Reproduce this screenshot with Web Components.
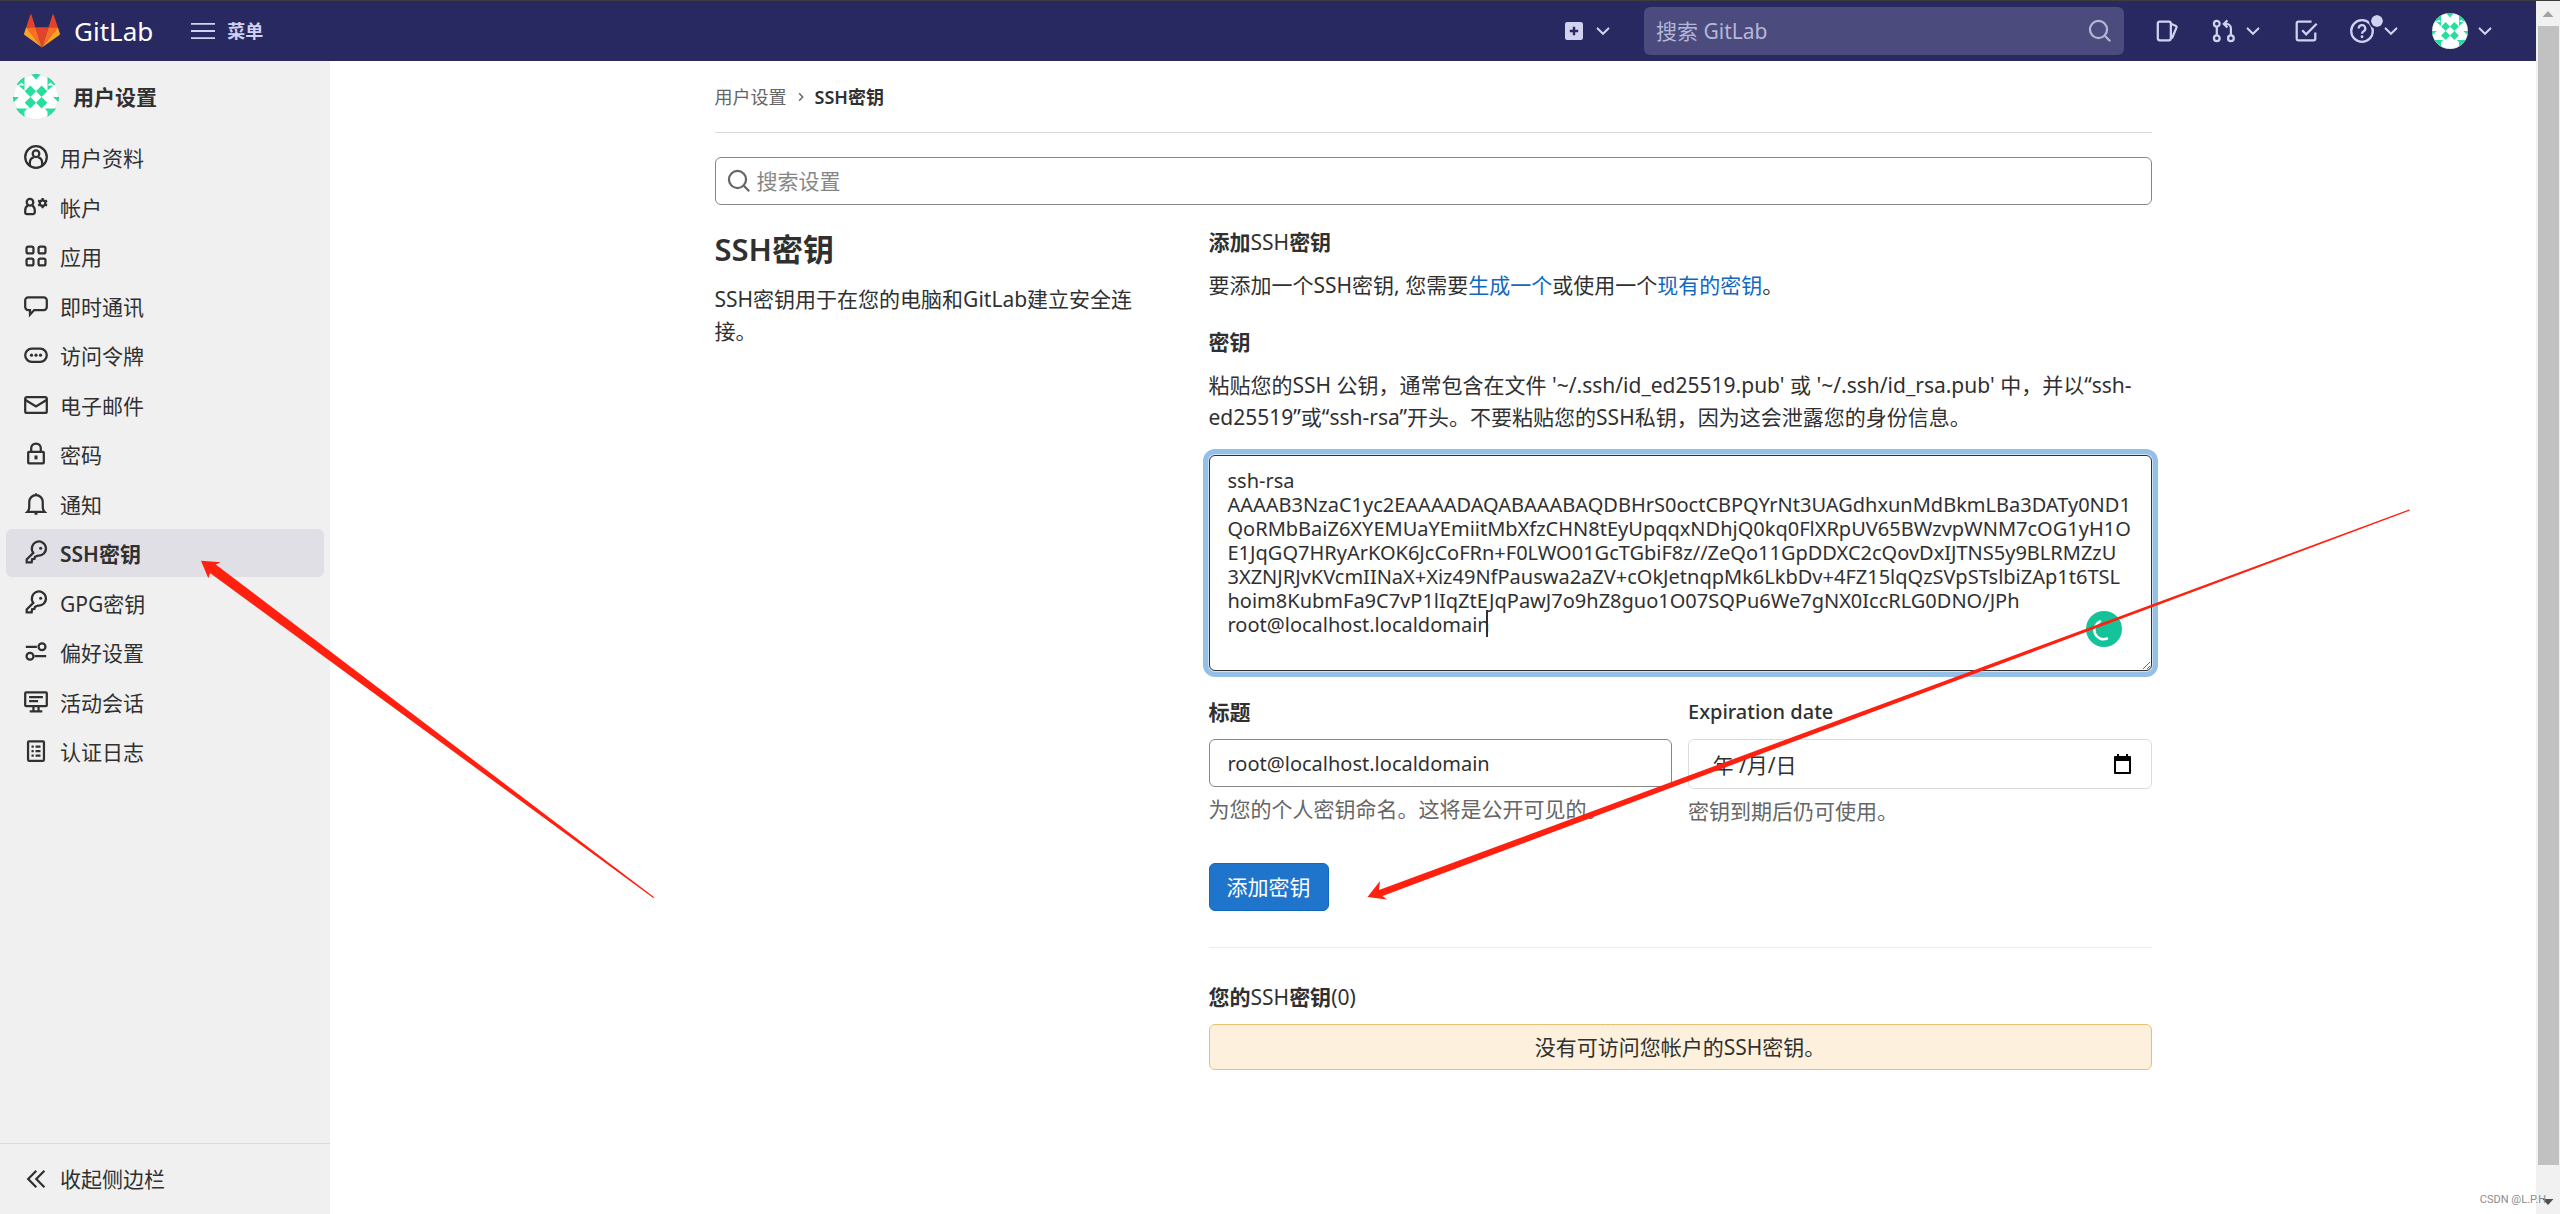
<!DOCTYPE html>
<html lang="zh-CN">
<head>
<meta charset="utf-8">
<title>SSH密钥 · 用户设置 · GitLab</title>
<style>
  :root {
    --text: #303030;
    --muted: #666;
    --nav: #292961;
    --nav-fg: #d1d1f0;
    --line: #dbdbdb;
  }
  body {
    margin: 0;
    font: 21px/32px "Noto Sans", "Noto Sans CJK SC", sans-serif;
    color: var(--text);
    background: #fff;
  }
</style>
</head>
<body>
<gl-app>
  <gl-navbar slot="nav"></gl-navbar>
  <gl-sidebar slot="side" heading="用户设置">
    <gl-nav-item icon="profile">用户资料</gl-nav-item>
    <gl-nav-item icon="account">帐户</gl-nav-item>
    <gl-nav-item icon="apps">应用</gl-nav-item>
    <gl-nav-item icon="comment">即时通讯</gl-nav-item>
    <gl-nav-item icon="token">访问令牌</gl-nav-item>
    <gl-nav-item icon="mail">电子邮件</gl-nav-item>
    <gl-nav-item icon="lock">密码</gl-nav-item>
    <gl-nav-item icon="bell">通知</gl-nav-item>
    <gl-nav-item icon="key" active>SSH密钥</gl-nav-item>
    <gl-nav-item icon="key">GPG密钥</gl-nav-item>
    <gl-nav-item icon="preferences">偏好设置</gl-nav-item>
    <gl-nav-item icon="monitor">活动会话</gl-nav-item>
    <gl-nav-item icon="log">认证日志</gl-nav-item>
  </gl-sidebar>
  <gl-breadcrumb parent="用户设置" current="SSH密钥"></gl-breadcrumb>
  <gl-settings-search></gl-settings-search>
  <gl-section heading="SSH密钥">
    <span slot="about">SSH密钥用于在您的电脑和GitLab建立安全连接。</span>
    <gl-key-form></gl-key-form>
    <gl-key-list></gl-key-list>
  </gl-section>
</gl-app>
<mark-arrows></mark-arrows>

<script>
const ICONS = {
  profile: '<circle cx="8" cy="8" r="7.2"/><circle cx="8" cy="5.8" r="2.2"/><path d="M3.900 13.400V12c0-2 1.200-3.400 2.700-3.700M12.100 13.400V12c0-2-1.200-3.400-2.700-3.700"/>',
  account: '<circle cx="4" cy="4.800" r="2.200"/><path d="M2.700 6.800C1.400 7.600.8 8.800.8 10.300v1.200a1.200 1.200 0 0 0 1.200 1.200h4a1.200 1.200 0 0 0 1.200-1.200v-1.200c0-1.500-.6-2.700-1.900-3.500"/><circle cx="12.400" cy="5.400" r="1.900"/><path d="M12.400 2v1.500M12.400 7.300v1.500M9.450 3.700l1.300.75M14.050 6.350l1.300.75M9.450 7.100l1.300-.75M14.050 4.450l1.300-.75"/>',
  apps: '<rect x="1.700" y="1.700" width="4.600" height="4.600" rx="1.200"/><rect x="9.700" y="1.700" width="4.600" height="4.600" rx="1.200"/><rect x="1.700" y="9.700" width="4.600" height="4.600" rx="1.200"/><rect x="9.700" y="9.700" width="4.600" height="4.600" rx="1.200"/>',
  comment: '<path d="M2.800 2.300h10.400a2 2 0 0 1 2 2v4.400a2 2 0 0 1-2 2H6.800L4 13.800v-3.100H2.800a2 2 0 0 1-2-2V4.300a2 2 0 0 1 2-2z"/>',
  token: '<rect x=".8" y="3.800" width="14.400" height="8.700" rx="4.350"/><g fill="currentColor" stroke="none"><circle cx="5" cy="8.100" r="1.050"/><circle cx="8" cy="8.100" r="1.050"/><circle cx="11" cy="8.100" r="1.050"/></g>',
  mail: '<rect x=".8" y="2.700" width="14.400" height="10.600" rx="1.200"/><path d="M1 4.700l7 4.300 7-4.300"/>',
  lock: '<rect x="2.800" y="6.500" width="10.400" height="7.700" rx=".5"/><path d="M4.800 6.400V4.200a3.200 3.200 0 0 1 6.400 0v2.200"/><path d="M8 9v2.600" stroke-width="2"/>',
  bell: '<path d="M2.200 13.300h11.600c-1-1-1.300-2-1.300-3.500V6.600a4.500 4.500 0 0 0-9 0v3.200c0 1.500-.3 2.500-1.300 3.500z"/><path d="M7 14.500h2M8 .9v1" stroke-width="1.300"/>',
  key: '<path d="M6.200 7.900A4.700 4.700 0 1 1 9.300 9.700L7.300 10.600 7 11.900 5.400 12.200 5.100 14.200H1.800V12.300z"/><circle cx="11.100" cy="4.800" r="1.050" fill="currentColor" stroke="none"/>',
  preferences: '<path d="M1.200 4.500h7.400M7 10.800h7.800"/><circle cx="12" cy="4.500" r="2.300"/><circle cx="4" cy="10.800" r="2.300"/>',
  monitor: '<rect x=".8" y="1.500" width="14.400" height="9.200" rx=".6"/><path d="M3.400 4.800h9.200M3.400 7.400h6M6.300 11v3M9.700 11v3M3.800 14.200h8.400"/>',
  log: '<rect x="2.700" y="1.500" width="10.600" height="13" rx=".6"/><path d="M5 5h1.500M7.700 5H11M5 8h1.500M7.700 8H11M5 11h1.500M7.700 11H11"/>',
  collapse: '<path d="M8.200 2.500L2.800 8l5.400 5.500M13.600 2.500L8.200 8l5.400 5.500"/>',
  menu: '<path d="M0 3.300h16M0 8h16M0 12.700h16" stroke-width="1.200"/>',
  plus: '<rect x="2" y="2" width="12" height="12" rx="1.500" fill="currentColor" stroke="none"/><path d="M8 5.200v5.600M5.200 8h5.600" stroke="var(--nav)" stroke-width="1.600"/>',
  chevron: '<path d="M3.200 5.700L8 10.500l4.800-4.800" stroke-width="1.800" stroke-linecap="round"/>',
  search: '<circle cx="7" cy="7" r="5.700"/><path d="M11.200 11.200l3.600 3.600"/>',
  issues: '<rect x="1.200" y="1.800" width="8.700" height="12.400" rx="1.300"/><path d="M10 3.200l3.300 1.400a.8.8 0 0 1 .4 1L10.600 13"/>',
  merge: '<circle cx="3.200" cy="3.200" r="1.900"/><circle cx="3.200" cy="12.800" r="1.900"/><circle cx="12.600" cy="12.800" r="1.900"/><path d="M3.200 5.200v5.600M12.600 10.800V6.300a3 3 0 0 0-3-3H8M10.300.9L7.900 3.300l2.400 2.400"/>',
  todo: '<path d="M11.700 1.800H3A1.200 1.200 0 0 0 1.800 3v10A1.200 1.200 0 0 0 3 14.200h10a1.200 1.200 0 0 0 1.200-1.200V9M5.500 7.500l2.600 2.700 7-7"/>',
  help: '<circle cx="8" cy="8" r="7.200"/><path d="M5.800 6.300a2.200 2.200 0 1 1 3.300 1.900c-.7.400-1.100.8-1.100 1.600"/><circle cx="8" cy="11.800" r=".95" fill="currentColor" stroke="none"/>',
  right: '<path d="M5.500 3l4.800 5-4.800 5" stroke-width="1.900"/>'
};

const define = (name, html, setup) => {
  customElements.define(name, class extends HTMLElement {
    connectedCallback() {
      if (this.shadowRoot) return;
      const root = this.attachShadow({ mode: 'open' });
      const template = document.createElement('template');
      template.innerHTML = '<style>*{box-sizing:border-box}:host([hidden]){display:none}</style>' +
        (typeof html === 'function' ? html(this) : html);
      root.append(template.content.cloneNode(true));
      if (setup) setup(this, root);
    }
  });
};

define('gl-icon', el => `
  <style>
    :host { display: inline-flex; flex: none; width: 24px; height: 24px; }
    :host([small]) { width: 18px; height: 18px; }
    svg { width: 100%; height: 100%; overflow: visible; }
  </style>
  <svg viewBox="0 0 16 16" fill="none" stroke="currentColor" stroke-width="1.500" aria-hidden="true">${ICONS[el.getAttribute('name')]}</svg>`);

define('gl-avatar', `
  <style>
    :host { display: block; flex: none; width: 46px; height: 46px; border-radius: 50%; overflow: hidden; background: #fff; }
    :host([small]) { width: 36px; height: 36px; }
    svg { display: block; width: 100%; height: 100%; }
  </style>
  <svg viewBox="0 0 46 46" aria-hidden="true">
    <defs>
      <g id="half" fill="#27df9c">
        <path d="M17.400 11.600l5.600 5.700-5.600 5.700-5.700-5.700zM17.400 23l5.600 5.700-5.600 5.700-5.700-5.700z"/>
        <path d="M18 0h5v5.800z"/>
        <path d="M11.500 0v11.500L8.700 8.600 5 11.300 0 8zM5.600 11.500h5.900v5z"/>
        <path d="M0 23h6l-6 5.700z"/>
        <path d="M2 34.500h12.200L8.600 41zM11.500 37.500v6L9 41z"/>
      </g>
    </defs>
    <use href="#half"/><use href="#half" transform="matrix(-1 0 0 1 46 0)"/>
    <circle cx="23" cy="23" r="22.500" fill="none" stroke="#000" stroke-opacity=".1"/>
  </svg>`);

define('gl-app', `
  <style>
    :host { display: flex; flex-direction: column; min-height: 100vh; border-top: 1px solid #3c3c3c; box-sizing: border-box; }
    .window, .page { display: flex; flex: 1; }
    .view { flex: 1; min-width: 0; display: flex; flex-direction: column; }
    main { flex: 1; min-width: 0; padding: 0 24px; }
    .limit { max-width: 1437px; margin: 0 auto; }
  </style>
  <div class="window">
    <div class="view">
      <slot name="nav"></slot>
      <div class="page">
        <slot name="side"></slot>
        <main><div class="limit"><slot></slot></div></main>
      </div>
    </div>
    <gl-scrollbar></gl-scrollbar>
  </div>`);

define('gl-scrollbar', `
  <style>
    :host { display: flex; flex-direction: column; width: 24px; background: #f1f1f1; align-items: center; }
    svg { width: 24px; height: 25px; flex: none; }
    .thumb { flex: 1; width: 21px; background: #c1c1c1; }
    .rest { height: 24px; }
  </style>
  <svg viewBox="0 0 24 25"><path d="M6.500 16L12 10l5.500 6z" fill="#a3a3a3"/></svg>
  <div class="thumb"></div><div class="rest"></div>
  <svg viewBox="0 0 24 25"><path d="M6.500 10l5.500 6 5.500-6z" fill="#505050"/></svg>`);

define('gl-navbar', `
  <style>
    :host { display: flex; align-items: center; justify-content: space-between; height: 60px; padding: 0 42px 0 24px; background: var(--nav); color: var(--nav-fg); }
    .group, a, button { display: flex; align-items: center; }
    .left { gap: 38px; }
    .right { gap: 32px; }
    a, button { color: inherit; background: none; border: 0; padding: 0; font: inherit; text-decoration: none; }
    .logo { gap: 14px; color: #fff; font: 26px/36px "Noto Sans", sans-serif; }
    .logo svg { width: 36px; height: 36px; }
    .menu { gap: 12px; font-size: 18px; font-weight: 700; }
    .drop { gap: 8px; }
    .search { display: flex; align-items: center; width: 480px; height: 48px; padding: 0 12px; border-radius: 6px; background: #4b4b7d; color: #b6b6d8; }
    input { flex: 1; min-width: 0; border: 0; outline: 0; padding: 0; background: none; font: inherit; color: inherit; }
    input::placeholder { color: #b6b6d8; opacity: 1; }
    .badge { position: relative; display: flex; }
    .badge::after { content: ""; position: absolute; top: -6px; right: -11px; width: 12px; height: 12px; border: 2px solid var(--nav); border-radius: 50%; background: var(--nav-fg); background-clip: padding-box; box-sizing: content-box; }
  </style>
  <div class="group left">
    <a class="logo" href="#"><svg viewBox="0 0 36 36" aria-hidden="true">
      <path d="M18 34.500L11.400 14.300h13.200z" fill="#e24329"/>
      <path d="M18 34.500L11.400 14.300H2.200zM18 34.500l6.600-20.200h9.200z" fill="#fc6d26"/>
      <path d="M2.200 14.300L.1 20.500c-.2.600 0 1.200.5 1.500L18 34.500zM33.800 14.300l2.100 6.200c.2.600 0 1.200-.5 1.500L18 34.500z" fill="#fca326"/>
      <path d="M2.200 14.300h9.200L7.500 2c-.2-.6-1.100-.6-1.300 0zM33.800 14.300h-9.200L28.500 2c.2-.6 1.100-.6 1.300 0z" fill="#e24329"/>
    </svg><span>GitLab</span></a>
    <button class="menu"><gl-icon name="menu"></gl-icon>菜单</button>
  </div>
  <div class="group right">
    <button class="drop" aria-label="新建"><gl-icon name="plus"></gl-icon><gl-icon name="chevron" small></gl-icon></button>
    <div class="search"><input type="text" placeholder="搜索 GitLab" aria-label="搜索 GitLab"><gl-icon name="search"></gl-icon></div>
    <a href="#" aria-label="议题"><gl-icon name="issues"></gl-icon></a>
    <button class="drop" aria-label="合并请求"><gl-icon name="merge"></gl-icon><gl-icon name="chevron" small></gl-icon></button>
    <a href="#" aria-label="待办事项"><gl-icon name="todo"></gl-icon></a>
    <button class="drop" aria-label="帮助"><span class="badge"><gl-icon name="help"></gl-icon></span><gl-icon name="chevron" small></gl-icon></button>
    <button class="drop" aria-label="用户"><gl-avatar small></gl-avatar><gl-icon name="chevron" small></gl-icon></button>
  </div>`);

define('gl-sidebar', el => `
  <style>
    :host { display: flex; flex-direction: column; width: 330px; flex: none; background: #f0f0f0; }
    header { display: flex; align-items: center; gap: 14px; padding: 13px; font-weight: 700; }
    nav { display: flex; flex-direction: column; justify-content: space-between; min-height: 642px; padding: 0 6px; }
    button { display: flex; align-items: center; gap: 12px; width: 100%; height: 71px; margin-top: auto; padding: 0 24px; border: 0; border-top: 1px solid var(--line); background: none; font: inherit; color: inherit; }
  </style>
  <header><gl-avatar></gl-avatar>${el.getAttribute('heading')}</header>
  <nav><slot></slot></nav>
  <button><gl-icon name="collapse"></gl-icon>收起侧边栏</button>`);

define('gl-nav-item', `
  <style>
    :host { display: block; }
    a { display: flex; align-items: center; gap: 12px; height: 48px; padding: 0 18px; border-radius: 6px; color: inherit; text-decoration: none; }
    span { padding-top: 2px; }
    :host([active]) a { background: #e0dfe5; font-weight: 600; }
  </style>
  <a href="#"><gl-icon></gl-icon><span><slot></slot></span></a>`,
  (el, root) => {
    const icon = document.createElement('gl-icon');
    icon.setAttribute('name', el.getAttribute('icon'));
    root.querySelector('gl-icon').replaceWith(icon);
  });

define('gl-breadcrumb', el => `
  <style>
    :host { display: flex; align-items: center; gap: 4px; height: 72px; box-sizing: border-box; border-bottom: 1px solid var(--line); font-size: 18px; }
    a { color: var(--muted); text-decoration: none; }
    b { font-weight: 600; color: var(--text); }
    gl-icon { width: 12px; height: 12px; margin: 0 4px; color: var(--muted); }
  </style>
  <a href="#">${el.getAttribute('parent')}</a><gl-icon name="right" small></gl-icon><b>${el.getAttribute('current')}</b>`);

define('gl-settings-search', `
  <style>
    :host { display: block; margin-top: 24px; }
    label { display: flex; align-items: center; gap: 6px; height: 48px; padding: 0 11px; border: 1px solid #868686; border-radius: 6px; color: var(--muted); }
    input { flex: 1; border: 0; outline: 0; padding: 0; background: none; font: inherit; color: var(--text); }
    input::placeholder { color: #868686; opacity: 1; }
  </style>
  <label><gl-icon name="search"></gl-icon><input type="text" placeholder="搜索设置" aria-label="搜索设置"></label>`);

define('gl-section', el => `
  <style>
    :host { display: grid; grid-template-columns: 446fr 943fr; gap: 48px; margin-top: 24px; }
    h4 { margin: 0 0 14px; font-size: 31px; line-height: 40px; font-weight: 600; }
    p { margin: 0; }
  </style>
  <div><h4>${el.getAttribute('heading')}</h4><p><slot name="about"></slot></p></div>
  <div><slot></slot></div>`);

define('gl-key-form', `
  <style>
    :host { display: block; }
    h5, label { display: block; margin: 0 0 14px; font-size: 21px; line-height: 26px; font-weight: 600; }
    h5 span { font-weight: 400; }
    label:lang(en) { font-size: 20px; font-weight: 500; }
    p { margin: 0; }
    .intro { margin-bottom: 28px; }
    a { color: #1068bf; text-decoration: none; }
    .box { position: relative; display: flex; margin: 22px 0 28px; }
    input, textarea { width: 100%; border: 1px solid #868686; border-radius: 6px; outline: 0; background: #fff; color: var(--text); font: 20px/24px "Noto Sans", "Noto Sans CJK SC", sans-serif; }
    textarea { height: 216px; padding: 13px 18px; border-color: #303030; box-shadow: 0 0 0 1px #cfe3f5, 0 0 0 6px #94bfe7; resize: vertical; white-space: pre; overflow: hidden; }
    .caret { position: absolute; left: 277px; top: 155px; width: 2px; height: 27px; background: #303030; }
    .checker { position: absolute; right: 30px; bottom: 24px; width: 36px; height: 36px; }
    .row { display: grid; grid-template-columns: 1fr 1fr; gap: 16px; margin-bottom: 36px; }
    input { display: block; height: 48px; padding: 0 18px; }
    .date { display: flex; align-items: center; height: 50px; padding-right: 18px; border: 1px solid var(--line); border-radius: 6px; }
    .date input { flex: 1; height: 48px; border: 0; font-size: 21px; }
    .date button { padding: 0; border: 0; background: none; display: flex; }
    .date svg { width: 21px; height: 24px; }
    small { display: block; margin-top: 6px; font-size: 21px; color: var(--muted); }
    .submit { height: 48px; padding: 0 17px; border: 1px solid #1068bf; border-radius: 6px; background: #1f75cb; color: #fff; font: inherit; }
  </style>
  <form>
    <h5>添加<span>SSH</span>密钥</h5>
    <p class="intro">要添加一个SSH密钥, 您需要<a href="#">生成一个</a>或使用一个<a href="#">现有的密钥</a>。</p>
    <label for="key">密钥</label>
    <p>粘贴您的SSH 公钥，通常包含在文件 '~/.ssh/id_ed25519.pub' 或 '~/.ssh/id_rsa.pub' 中，并以“ssh-ed25519”或“ssh-rsa”开头。不要粘贴您的SSH私钥，因为这会泄露您的身份信息。</p>
    <div class="box">
      <textarea id="key" spellcheck="false">ssh-rsa
AAAAB3NzaC1yc2EAAAADAQABAAABAQDBHrS0octCBPQYrNt3UAGdhxunMdBkmLBa3DATy0ND1
QoRMbBaiZ6XYEMUaYEmiitMbXfzCHN8tEyUpqqxNDhjQ0kq0FlXRpUV65BWzvpWNM7cOG1yH1O
E1JqGQ7HRyArKOK6JcCoFRn+F0LWO01GcTGbiF8z//ZeQo11GpDDXC2cQovDxIJTNS5y9BLRMZzU
3XZNJRJvKVcmIINaX+Xiz49NfPauswa2aZV+cOkJetnqpMk6LkbDv+4FZ15lqQzSVpSTslbiZAp1t6TSL
hoim8KubmFa9C7vP1lIqZtEJqPawJ7o9hZ8guo1O07SQPu6We7gNX0IccRLG0DNO/JPh
root@localhost.localdomain</textarea>
      <span class="caret"></span>
      <svg class="checker" viewBox="0 0 36 36" aria-hidden="true"><circle cx="18" cy="18" r="18" fill="#15c39a"/><path d="M14 10.500a9 9 0 0 0 7 17" fill="none" stroke="#fff" stroke-width="2.500" stroke-linecap="round"/></svg>
    </div>
    <div class="row">
      <div><label for="title">标题</label><input id="title" type="text" value="root@localhost.localdomain"><small>为您的个人密钥命名。这将是公开可见的。</small></div>
      <div><label for="expires" lang="en">Expiration date</label>
        <div class="date"><input id="expires" type="text" value="&nbsp;年 /月/日"><button type="button" aria-label="选择日期"><svg viewBox="0 0 21 24" aria-hidden="true"><path d="M5 2h2v2h7V2h2v2h2a1 1 0 0 1 1 1v16a1 1 0 0 1-1 1H3a1 1 0 0 1-1-1V5a1 1 0 0 1 1-1h2zM4 9v11h13V9z" fill="#000" fill-rule="evenodd"/></svg></button></div>
        <small>密钥到期后仍可使用。</small></div>
    </div>
    <button class="submit" type="button">添加密钥</button>
  </form>`);

define('gl-key-list', `
  <style>
    :host { display: block; margin-top: 36px; padding-top: 36px; border-top: 1px solid #ececec; }
    h5 { margin: 0 0 14px; font-size: 21px; line-height: 26px; font-weight: 600; }
    h5 span { font-weight: 400; }
    p { margin: 0; padding: 6px; text-align: center; background: #fdf1dd; border: 1px solid #e9be74; border-radius: 6px; }
  </style>
  <h5>您的<span>SSH</span>密钥<span>(0)</span></h5>
  <p>没有可访问您帐户的SSH密钥。</p>`);

define('mark-arrows', `
  <style>
    :host { position: absolute; inset: 0; pointer-events: none; }
    svg { position: absolute; left: 0; top: 0; }
    span { position: absolute; right: 14px; bottom: 6px; font: 11px/16px Roboto, sans-serif; color: #8c8c8c; }
  </style>
  <svg width="2560" height="1214" viewBox="0 0 2560 1214" fill="#ff2010" aria-hidden="true">
    <path d="M201 560.700L220.700 562.300 215.700 564.500 654.300 897.300 653.300 898 210 573 208.300 578.300z"/>
    <path d="M1367.500 897L1380 881 1379 890 2409 509.500 2410 510.500 1382.500 896 1387 899.500z"/>
  </svg>
  <span>CSDN @L.P.H</span>`);
</script>
</body>
</html>
